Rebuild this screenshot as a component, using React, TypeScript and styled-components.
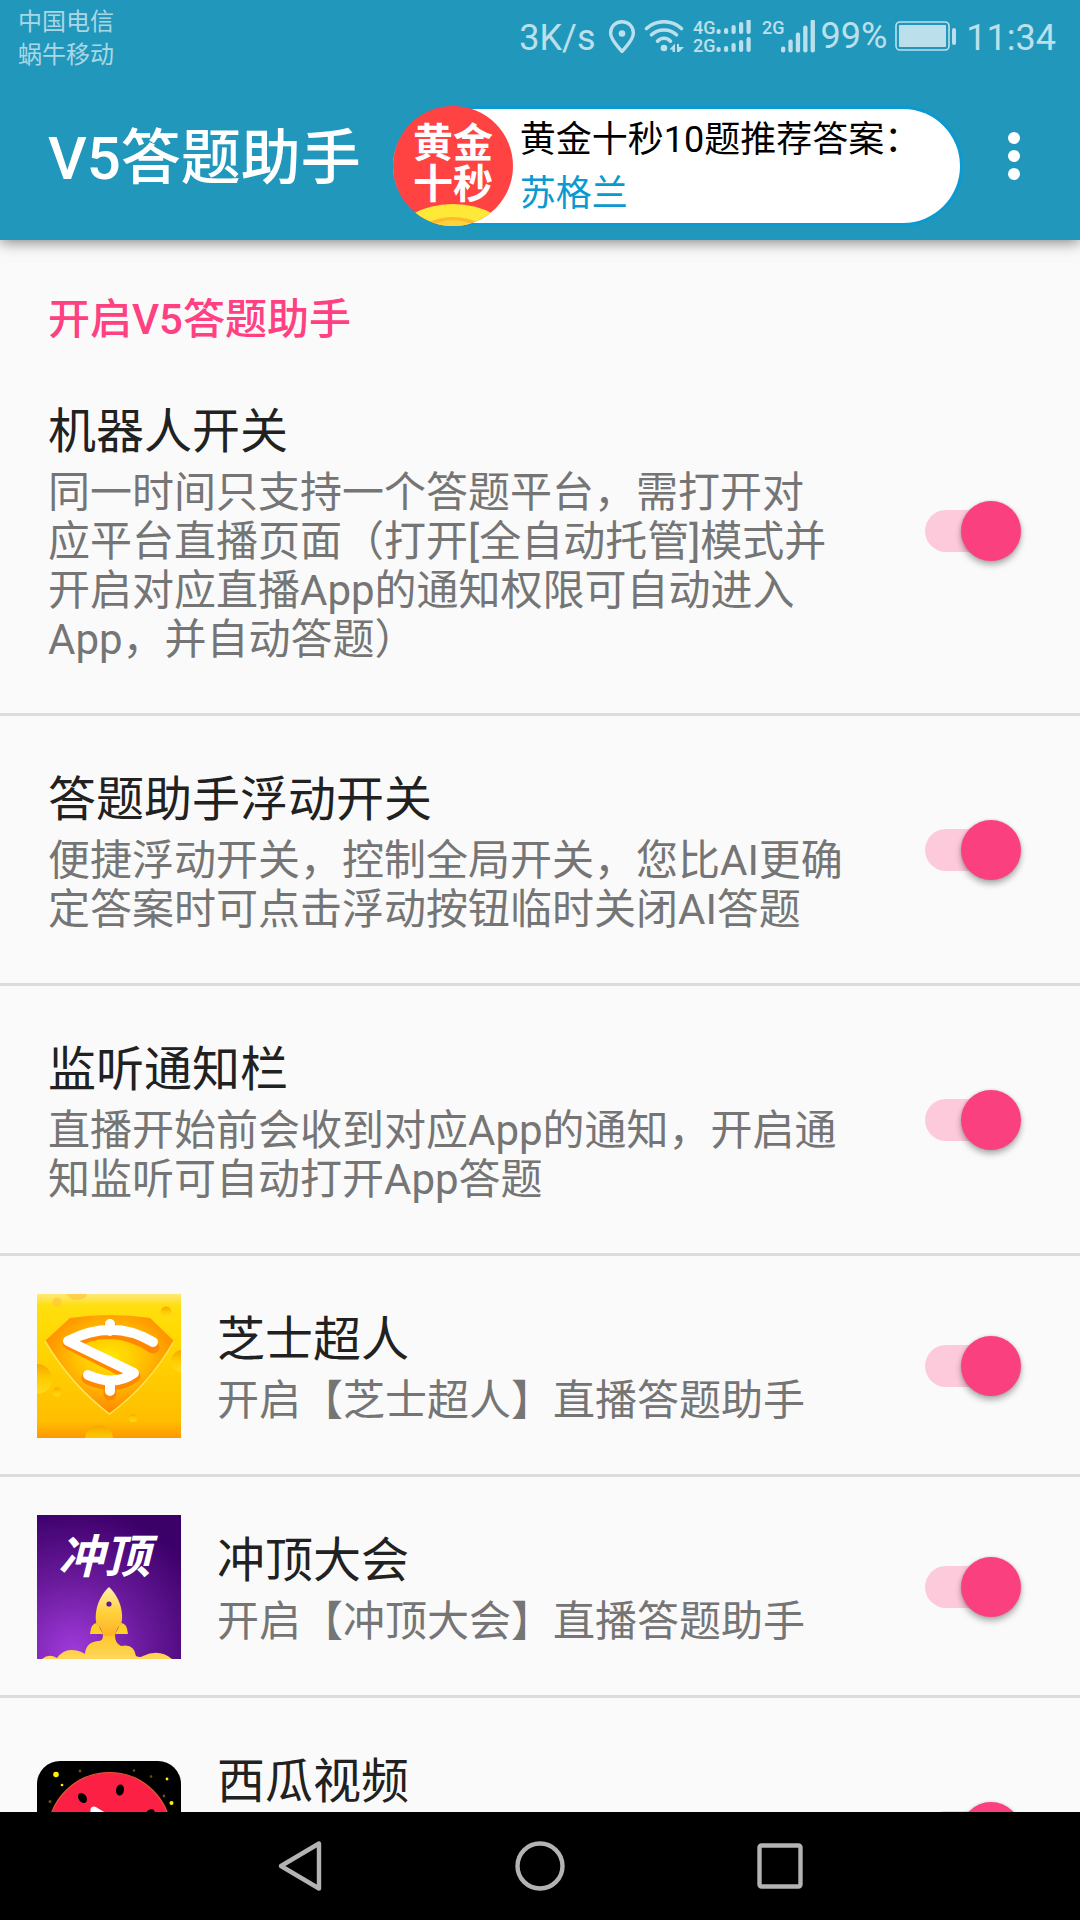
import React from "react";
import styled, { createGlobalStyle } from "styled-components";

const sans = `Roboto, "Noto Sans CJK SC", sans-serif`;

const GlobalStyle = createGlobalStyle`
  * { box-sizing: border-box; }
  body { margin: 0; background: #fafafa; font-family: ${sans}; }
`;

const Screen = styled.div`
  display: flex;
  flex-direction: column;
  height: 100vh;
  overflow: hidden;
  background: #fafafa;
`;

const Header = styled.header`
  position: relative;
  z-index: 1;
  flex: none;
  background: #2198bb;
  box-shadow: 0 2px 14px rgba(0, 0, 0, 0.5);
`;

const StatusBar = styled.div`
  display: flex;
  justify-content: space-between;
  align-items: flex-start;
  height: 72px;
  padding: 6px 24px 0 18px;
  color: #bce0eb;
`;

const Carriers = styled.div`
  font-size: 24px;
  line-height: 33px;
  color: #a9d7e5;
`;

const StatusItems = styled.div`
  display: flex;
  align-items: center;
  height: 64px;
  font-size: 36px;
  line-height: 64px;

  svg {
    display: block;
    flex: none;
  }
`;

const BatteryGroup = styled.span`
  display: flex;
  align-items: center;
  gap: 8px;
  padding-bottom: 4px;
`;

const Speed = styled.span`
  margin-right: 12px;
`;

const Clock = styled.span`
  margin-left: 9px;
`;

const Toolbar = styled.div`
  display: flex;
  align-items: center;
  height: 168px;
  padding: 0 36px 0 48px;
`;

const AppTitle = styled.h1`
  flex: none;
  margin: 0;
  padding-top: 6px;
  font-size: 60px;
  font-weight: 500;
  line-height: 72px;
  color: #fff;
`;

const AnswerPill = styled.section`
  display: flex;
  flex: 1;
  gap: 7px;
  height: 120px;
  margin: 20px 21px 0 32px;
  border: 3px solid #0a99d0;
  border-left: 0;
  border-radius: 60px;
  background: #fff;

  svg {
    flex: none;
    margin-top: -3px;
  }
`;

const AnswerText = styled.div`
  padding-top: 4px;
  font-size: 36px;
  line-height: 54px;
  white-space: nowrap;
  color: #000;
`;

const Answer = styled.div`
  color: #0a99d0;
`;

const IconButton = styled.button`
  display: flex;
  align-items: center;
  justify-content: center;
  width: 60px;
  height: 96px;
  padding: 0;
  border: 0;
  background: none;
  cursor: pointer;
`;

const Settings = styled.main`
  flex: 1;
  min-height: 0;
  overflow-y: auto;
  scrollbar-width: none;
`;

const Category = styled.h2`
  margin: 0;
  padding: 52px 48px 0;
  font-size: 42px;
  font-weight: 500;
  line-height: 56px;
  color: #ff4081;
`;

const Row = styled.label<{ $withIcon: boolean }>`
  display: flex;
  align-items: center;
  padding: 50px 59px 49px ${(p) => (p.$withIcon ? 37 : 48)}px;
  border-bottom: 3px solid #dcdcdc;
  cursor: pointer;
`;

const RowIcon = styled.span`
  flex: none;
  width: 144px;
  height: 144px;
  margin: -13px 36px -14px 0;

  svg {
    display: block;
  }
`;

const RowText = styled.span`
  flex: 1;
  min-width: 0;
  margin-right: 81px;
`;

const RowTitle = styled.span`
  display: block;
  margin-bottom: 2px;
  font-size: 48px;
  line-height: 68px;
  color: #212121;
`;

const RowSummary = styled.span`
  display: block;
  font-size: 42px;
  line-height: 49px;
  color: #757575;
`;

const Switch = styled.input`
  appearance: none;
  display: grid;
  align-items: center;
  flex: none;
  width: 96px;
  height: 60px;
  margin: 0;
  cursor: pointer;

  &::before,
  &::after {
    content: "";
    grid-area: 1 / 1;
  }
  &::before {
    height: 42px;
    margin-right: 8px;
    border-radius: 21px;
    background: #c7c7c7;
  }
  &::after {
    width: 60px;
    height: 60px;
    border-radius: 50%;
    background: #f1f1f1;
    box-shadow: 0 4px 6px rgba(0, 0, 0, 0.3), 0 0 3px rgba(0, 0, 0, 0.15);
  }
  &:checked::before {
    background: #fccada;
  }
  &:checked::after {
    justify-self: end;
    background: #fb4080;
  }
`;

const NavBar = styled.nav`
  display: flex;
  flex: none;
  height: 108px;
  padding: 0 180px;
  background: #000;
`;

const NavButton = styled.button`
  display: flex;
  flex: 1;
  align-items: center;
  justify-content: center;
  padding: 0;
  border: 0;
  background: none;
  cursor: pointer;
`;

function SignalIcons() {
  const dual = [5, 6, 9, 12, 15];
  const single = [6, 13, 20, 27, 33];
  return (
    <svg width="213" height="36" viewBox="0 0 213 36" fill="currentColor" aria-hidden="true">
      {/* location */}
      <path
        d="M14 1.800C7 1.800 2.600 7 2.600 13C2.600 20 9.500 26 14 31.500C18.500 26 25.400 20 25.400 13C25.400 7 21 1.800 14 1.800Z"
        fill="none"
        stroke="currentColor"
        strokeWidth="3.400"
        strokeLinejoin="round"
      />
      <circle cx="14" cy="13.500" r="3.300" />
      {/* wifi */}
      <g fill="none" stroke="currentColor" strokeWidth="3.600" strokeLinecap="round">
        <path d="M38.500 8.500C48.500 -.5 63.500 -.5 73.500 8.500" />
        <path d="M43.500 14.800C50.500 8.300 61.500 8.300 68.500 14.800" />
        <path d="M49.500 21.200C53 17.200 59 17.200 62.500 21.200" />
      </g>
      <circle cx="56" cy="28" r="3.300" />
      <path d="M61.500 29.500L67 23.500V32H64.500V29.500ZM69 24H71V27H76L71 32H69Z" />
      {/* dual network */}
      <text x="85" y="14" fontSize="18" fontWeight="500">4G</text>
      <text x="85" y="32" fontSize="18" fontWeight="500">2G</text>
      {dual.map((h, i) => (
        <React.Fragment key={h}>
          <rect x={108.5 + i * 7.500} y={14 - h} width="4.200" height={h} rx="2" />
          <rect x={108.5 + i * 7.500} y={32 - h} width="4.200" height={h} rx="2" />
        </React.Fragment>
      ))}
      {/* second network */}
      <text x="154" y="14" fontSize="18" fontWeight="500">2G</text>
      {single.map((h, i) => (
        <rect key={h} x={173 + i * 7.400} y={32.5 - h} width="4.300" height={h} rx="2" />
      ))}
    </svg>
  );
}

function BatteryIcon() {
  return (
    <svg width="62" height="30" viewBox="0 0 62 30" fill="currentColor" aria-hidden="true">
      <rect x="1" y="1" width="53" height="28" rx="4" fill="none" stroke="currentColor" strokeWidth="1.600" />
      <rect x="4" y="4" width="47" height="22" rx="1" />
      <rect x="57" y="7" width="4" height="17" rx="2" />
    </svg>
  );
}

function GoldLogo() {
  return (
    <svg width="120" height="120" viewBox="0 0 120 120" aria-hidden="true">
      <clipPath id="gold-clip"><circle cx="60" cy="60" r="60" /></clipPath>
      <g clipPath="url(#gold-clip)">
        <rect width="120" height="120" fill="#ff4343" />
        <ellipse cx="60" cy="133" rx="58" ry="35" fill="#ffe938" />
        <ellipse cx="60" cy="134" rx="38" ry="23" fill="#ffb92e" />
        <ellipse cx="60" cy="137" rx="32" ry="23" fill="#ffd43a" />
        <g fill="#fff" fontSize="40" fontWeight="700" textAnchor="middle" fontFamily={sans}>
          <text x="60" y="51">黄金</text>
          <text x="60" y="92">十秒</text>
        </g>
      </g>
    </svg>
  );
}

function CheeseLogo() {
  return (
    <svg width="144" height="144" viewBox="0 0 144 144" aria-hidden="true">
      <defs>
        <linearGradient id="cheese-bg" x1="0" y1="0" x2="0" y2="1">
          <stop offset="0" stopColor="#ffe97a" />
          <stop offset=".08" stopColor="#ffdf10" />
          <stop offset=".3" stopColor="#ffd800" />
          <stop offset=".88" stopColor="#ffbe00" />
          <stop offset="1" stopColor="#ff9800" />
        </linearGradient>
        <radialGradient id="cheese-gem" cx=".5" cy=".42" r=".55">
          <stop offset="0" stopColor="#ffe800" />
          <stop offset=".4" stopColor="#ffc800" />
          <stop offset="1" stopColor="#ff8a00" />
        </radialGradient>
        <linearGradient id="cheese-hole" x1="0" y1="0" x2="0" y2="1">
          <stop offset="0" stopColor="#f5a800" />
          <stop offset=".5" stopColor="#ffcc00" />
          <stop offset="1" stopColor="#ffda20" />
        </linearGradient>
      </defs>
      <rect width="144" height="144" fill="url(#cheese-bg)" />
      <g fill="url(#cheese-hole)">
        <circle cx="129" cy="18" r="5.500" />
        <circle cx="0" cy="85" r="15" />
        <circle cx="145" cy="67" r="11" />
        <circle cx="20" cy="98" r="4.500" />
        <circle cx="96" cy="124" r="4" />
        <circle cx="62" cy="145" r="14" />
      </g>
      <g fill="#ffc23a" opacity=".6">
        <circle cx="20" cy="8" r="4.500" />
        <ellipse cx="40" cy="0" rx="10" ry="6" />
      </g>
      <path d="M8 47L33 24Q73 18 113 24L137 47Q112 91 72.500 120Q34 91 8 47Z" fill="url(#cheese-gem)" />
      <path d="M8 47Q34 91 72.500 120Q112 91 137 47" fill="none" stroke="#ffe45a" strokeWidth="1.500" />
      <g fill="none" strokeLinecap="round" strokeLinejoin="round">
        <path d="M116 51Q76 24 32 47L97 80Q78 94 51 82M73 31V37M73 88V98" stroke="#ff8800" strokeWidth="13" transform="translate(0 2)" />
        <path d="M116 48Q76 24 31 47L97 79Q78 93 51 81M73 30V37M73 87V97" stroke="#fff" strokeWidth="10" />
      </g>
    </svg>
  );
}

function RocketLogo() {
  return (
    <svg width="144" height="144" viewBox="0 0 144 144" aria-hidden="true">
      <defs>
        <radialGradient id="rocket-bg" cx=".25" cy=".95" r="1">
          <stop offset="0" stopColor="#a03adb" />
          <stop offset=".5" stopColor="#6a1a9c" />
          <stop offset="1" stopColor="#3c0069" />
        </radialGradient>
        <linearGradient id="rocket-body" x1="0" y1="0" x2="0" y2="1">
          <stop offset="0" stopColor="#fff0b0" />
          <stop offset=".5" stopColor="#ffd23c" />
          <stop offset="1" stopColor="#ffb224" />
        </linearGradient>
        <linearGradient id="rocket-smoke" x1="0" y1="0" x2="0" y2="1">
          <stop offset="0" stopColor="#ffc72b" />
          <stop offset="1" stopColor="#ffd75a" />
        </linearGradient>
      </defs>
      <rect width="144" height="144" fill="url(#rocket-bg)" />
      <text x="67" y="58" fontSize="46" fontWeight="700" fontStyle="italic" textAnchor="middle" fontFamily={sans} fill="#fff">
        冲顶
      </text>
      <path d="M60 108Q54 108 53 119H66ZM84 108Q90 108 91 119H78Z" fill="#ffd028" />
      <path d="M72 72C59 84 57 102 60 110Q65 113 66 121H78Q79 113 84 110C87 102 85 84 72 72Z" fill="url(#rocket-body)" />
      <circle cx="72" cy="89" r="2.600" fill="#5f1791" />
      <path
        d="M5 144Q12 138 20 143Q26 135 34 135Q42 135 48 139Q49 127 61 126Q66 126 66 121H78Q78 128 84 131Q97 128 99 141Q103 143 106 141Q122 133 135 144Z"
        fill="url(#rocket-smoke)"
      />
    </svg>
  );
}

function MelonLogo() {
  return (
    <svg width="144" height="144" viewBox="0 0 144 144" aria-hidden="true">
      <rect width="144" height="144" rx="23" fill="#000" />
      <circle cx="72.500" cy="73" r="61.500" fill="#fc2144" stroke="#e8572f" strokeWidth="1.200" />
      <g>
        <ellipse cx="45.500" cy="37" rx="4" ry="5.500" transform="rotate(-35 45.500 37)" />
        <ellipse cx="83" cy="29" rx="4" ry="5.500" transform="rotate(8 83 29)" />
        <ellipse cx="113" cy="53" rx="4" ry="5.500" transform="rotate(40 113 53)" />
        <ellipse cx="32" cy="86" rx="4" ry="5.500" transform="rotate(85 32 86)" />
        <ellipse cx="72" cy="117" rx="4" ry="5.500" />
      </g>
      <path d="M57 49L97 73L57 97Z" fill="#fff" stroke="#fff" strokeWidth="7" strokeLinejoin="round" />
      <g fill="#fff200">
        <circle cx="19" cy="13.500" r="2.800" />
        <circle cx="25" cy="24" r="1.300" />
        <circle cx="130" cy="18" r="1.400" />
        <circle cx="134.500" cy="42" r="2" />
      </g>
      <g fill="#5f5a00">
        <circle cx="43" cy="10" r="1.400" />
        <circle cx="97" cy="9.500" r="1.200" />
        <circle cx="114" cy="15.500" r="1.300" />
        <circle cx="127" cy="35" r="1.400" />
        <circle cx="13" cy="40.500" r="1.500" />
      </g>
    </svg>
  );
}

interface Setting {
  id: string;
  title: string;
  summary: string;
  icon?: React.ReactNode;
}

const settings: Setting[] = [
  {
    id: "robot",
    title: "机器人开关",
    summary:
      "同一时间只支持一个答题平台，需打开对应平台直播页面（打开[全自动托管]模式并开启对应直播App的通知权限可自动进入App，并自动答题）",
  },
  {
    id: "floating",
    title: "答题助手浮动开关",
    summary: "便捷浮动开关，控制全局开关，您比AI更确定答案时可点击浮动按钮临时关闭AI答题",
  },
  {
    id: "notify",
    title: "监听通知栏",
    summary: "直播开始前会收到对应App的通知，开启通知监听可自动打开App答题",
  },
  { id: "cheese", title: "芝士超人", summary: "开启【芝士超人】直播答题助手", icon: <CheeseLogo /> },
  { id: "rocket", title: "冲顶大会", summary: "开启【冲顶大会】直播答题助手", icon: <RocketLogo /> },
  { id: "melon", title: "西瓜视频", summary: "开启【西瓜视频】百万英雄直播答题助手", icon: <MelonLogo /> },
];

function SettingRow({ id, title, summary, icon }: Setting) {
  return (
    <Row htmlFor={id} $withIcon={Boolean(icon)}>
      {icon && <RowIcon>{icon}</RowIcon>}
      <RowText>
        <RowTitle>{title}</RowTitle>
        <RowSummary>{summary}</RowSummary>
      </RowText>
      <Switch id={id} type="checkbox" role="switch" defaultChecked />
    </Row>
  );
}

export default function App() {
  return (
    <Screen lang="zh-CN">
      <GlobalStyle />
      <Header>
        <StatusBar>
          <Carriers>
            <div>中国电信</div>
            <div>蜗牛移动</div>
          </Carriers>
          <StatusItems>
            <Speed>3K/s</Speed>
            <SignalIcons />
            <BatteryGroup>
              <span>99%</span>
              <BatteryIcon />
            </BatteryGroup>
            <Clock>11:34</Clock>
          </StatusItems>
        </StatusBar>
        <Toolbar>
          <AppTitle>V5答题助手</AppTitle>
          <AnswerPill>
            <GoldLogo />
            <AnswerText>
              <div>黄金十秒10题推荐答案：</div>
              <Answer>苏格兰</Answer>
            </AnswerText>
          </AnswerPill>
          <IconButton type="button" aria-label="更多">
            <svg width="12" height="48" viewBox="0 0 12 48" fill="#fff">
              <circle cx="6" cy="6" r="6" />
              <circle cx="6" cy="24" r="6" />
              <circle cx="6" cy="42" r="6" />
            </svg>
          </IconButton>
        </Toolbar>
      </Header>
      <Settings>
        <Category>开启V5答题助手</Category>
        {settings.map((s) => (
          <SettingRow key={s.id} {...s} />
        ))}
      </Settings>
      <NavBar>
        <NavButton type="button" aria-label="返回">
          <svg width="46" height="52" viewBox="0 0 46 52" fill="none" stroke="#b3b3b3" strokeWidth="4.400" strokeLinejoin="round">
            <path d="M42 3.500V48.500L4 26Z" />
          </svg>
        </NavButton>
        <NavButton type="button" aria-label="主屏幕">
          <svg width="52" height="52" viewBox="0 0 52 52" fill="none" stroke="#b3b3b3" strokeWidth="4.400">
            <circle cx="26" cy="26" r="22.500" />
          </svg>
        </NavButton>
        <NavButton type="button" aria-label="最近任务">
          <svg width="46" height="46" viewBox="0 0 46 46" fill="none" stroke="#b3b3b3" strokeWidth="4.400">
            <rect x="2.500" y="2.500" width="41" height="41" rx="2" />
          </svg>
        </NavButton>
      </NavBar>
    </Screen>
  );
}
